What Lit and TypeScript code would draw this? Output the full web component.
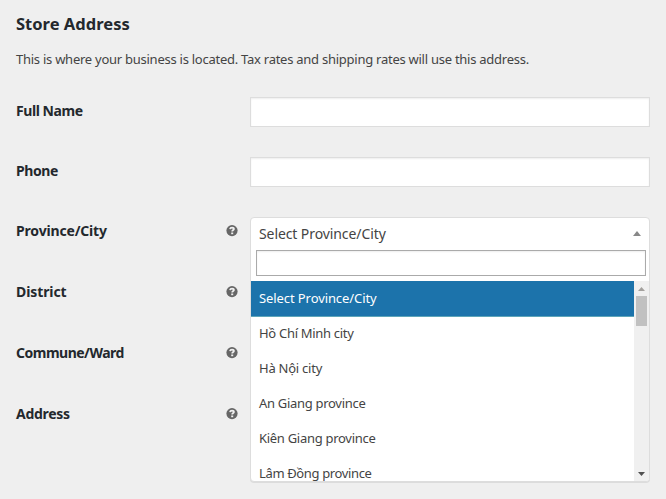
import { LitElement, html, css } from "lit";
import { customElement, property } from "lit/decorators.js";
import { styleMap } from "lit/directives/style-map.js";

@customElement("help-tip")
class HelpTip extends LitElement {
  static styles = css`
    :host { display: block; width: 12px; height: 12px; }
    svg { display: block; }
  `;
  render() {
    return html`<svg width="12" height="12" viewBox="0 0 12 12">
      <circle cx="6" cy="5.6" r="5.6" fill="#666"></circle>
      <path d="M4 4.1C4.2 2.9 5 2.6 6 2.6C7.2 2.6 7.9 3 7.9 3.9C7.9 5.1 6.2 5 6.2 6.6" fill="none" stroke="#f0f0f0" stroke-width="1.8"></path>
      <rect x="5.2" y="7.5" width="2" height="1.7" fill="#f0f0f0"></rect>
    </svg>`;
  }
}

interface Option { text: string; tracking: number; }

@customElement("province-select")
class ProvinceSelect extends LitElement {
  @property({ type: Array }) options: Option[] = [];
  static styles = css`
    :host { display: block; }
    .box { box-sizing: border-box; width: 400px; height: 265px; border: 1px solid #ddd; border-radius: 4px; background: #fff; overflow: hidden; box-shadow: 0 1px 0 #dcdcdc; }
    .current { display: flex; justify-content: space-between; align-items: center; height: 32px; padding: 0 8px; font-size: 14px; letter-spacing: -0.09px; color: #444; }
    .current span { line-height: 20px; }
    .current svg { margin-bottom: 1px; }
    .search { box-sizing: border-box; height: 26px; margin: 0 3px 5px 5px; border: 1px solid #aaa; background: #fff; box-shadow: inset 0 1px 2px rgba(0,0,0,.07); }
    .list { display: flex; height: 200px; }
    .options { flex: 1; overflow: hidden; }
    .option { box-sizing: border-box; height: 35px; line-height: 35px; padding-left: 8px; font-size: 13px; color: #444; white-space: nowrap; }
    .option.active { background: #1c73ab; color: #fff; box-shadow: 0 1px 0 #5da5b9; }
    .bar { box-sizing: border-box; width: 15px; background: #f0f0f0; display: flex; flex-direction: column; align-items: center; padding: 6px 0 5px; }
    .thumb { width: 11px; height: 30px; margin-top: 5px; background: #c1c1c1; }
    .spacer { flex: 1; }
    svg { display: block; }
  `;
  render() {
    return html`<div class="box">
      <div class="current"><span>Select Province/City</span>
        <svg width="8" height="5" viewBox="0 0 8 5"><path d="M0 5L4 0L8 5Z" fill="#888"></path></svg></div>
      <div class="search"></div>
      <div class="list">
        <div class="options">${this.options.map((o, i) => html`<div class="option ${i === 0 ? "active" : ""}" style=${styleMap({ letterSpacing: `${o.tracking}px` })}>${o.text}</div>`)}</div>
        <div class="bar">
          <svg width="7" height="4" viewBox="0 0 7 4"><path d="M0 4L3.5 0L7 4Z" fill="#a3a09d"></path></svg>
          <div class="thumb"></div><div class="spacer"></div>
          <svg width="7" height="4" viewBox="0 0 7 4"><path d="M0 0L3.5 4L7 0Z" fill="#505050"></path></svg>
        </div>
      </div>
    </div>`;
  }
}

const OPTIONS: Option[] = [
  { text: "Select Province/City", tracking: -0.09 },
  { text: "Hồ Chí Minh city", tracking: -0.3 },
  { text: "Hà Nội city", tracking: -0.24 },
  { text: "An Giang province", tracking: -0.3 },
  { text: "Kiên Giang province", tracking: -0.29 },
  { text: "Lâm Đồng province", tracking: -0.36 },
];

@customElement("app-root")
class AppRoot extends LitElement {
  static styles = css`
    :host { display: block; box-sizing: border-box; width: 666px; height: 499px; overflow: hidden; padding: 12px 16px; background: #efefef; font-family: "Noto Sans", sans-serif; }
    h2 { margin: 0; height: 24px; line-height: 24px; font-size: 16.5px; font-weight: 700; letter-spacing: 0.02px; color: #23282d; }
    p { margin: 13px 0 27px; height: 21px; line-height: 21px; font-size: 13px; letter-spacing: -0.255px; color: #444; white-space: nowrap; }
    .form { display: grid; grid-template-columns: 234px 400px; grid-template-rows: 60px 60px 60px 61px 61px 61px; }
    .label { grid-column: 1; display: flex; justify-content: space-between; align-items: center; height: 28px; padding-right: 12px; font-size: 14px; font-weight: 700; color: #23282d; }
    .label span { line-height: 20px; }
    .label.low { padding-top: 1px; }
    .input { box-sizing: border-box; height: 30px; border: 1px solid #ddd; background: #fff; box-shadow: inset 0 1px 2px rgba(0,0,0,.07); }
    province-select { grid-column: 2; grid-row: 3 / span 4; }
  `;
  private label(text: string, tracking: number, tip = false, low = false) {
    return html`<div class="label ${low ? "low" : ""}">
      <span style=${styleMap({ letterSpacing: `${tracking}px` })}>${text}</span>${tip ? html`<help-tip></help-tip>` : ""}
    </div>`;
  }
  render() {
    return html`
      <h2>Store Address</h2>
      <p>This is where your business is located. Tax rates and shipping rates will use this address.</p>
      <div class="form">
        ${this.label("Full Name", -0.43)}<div class="input"></div>
        ${this.label("Phone", -0.4)}<div class="input"></div>
        ${this.label("Province/City", -0.17, true)}
        <province-select .options=${OPTIONS}></province-select>
        ${this.label("District", -0.1, true, true)}
        ${this.label("Commune/Ward", -0.5, true, true)}
        ${this.label("Address", -0.28, true, true)}
      </div>`;
  }
}
